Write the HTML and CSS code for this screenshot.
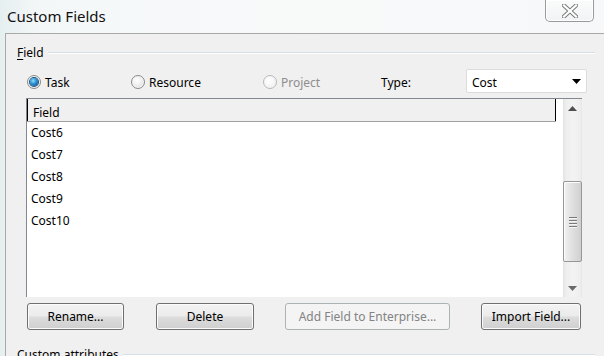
FILE: index.html
```html
<!DOCTYPE html>
<html>
<head>
<meta charset="utf-8">
<link rel="stylesheet" href="styles.css">
</head>
<body>
<div class="window">
  <div class="titlebar">
    <span class="title">Custom Fields</span>
    <div class="close">
      <svg width="16" height="14" viewBox="0 0 16 14">
        <path d="M2 1.5 L14 12.5 M14 1.5 L2 12.5" stroke="#7d7d7d" stroke-width="4.2" stroke-linecap="square" fill="none"/>
        <path d="M2 1.5 L14 12.5 M14 1.5 L2 12.5" stroke="#ffffff" stroke-width="2.2" stroke-linecap="square" fill="none"/>
      </svg>
    </div>
  </div>
  <div class="client">
    <div class="group">
      <span class="glabel"><u>F</u>ield</span>
      <span class="gline"></span>
    </div>
    <div class="radios">
      <div class="opt w1"><span class="radio on"><span class="dot"></span></span><span class="otext">Task</span></div>
      <div class="opt w2"><span class="radio"></span><span class="otext">Resource</span></div>
      <div class="opt w3 disabled"><span class="radio dis"></span><span class="otext">Project</span></div>
      <span class="typelabel otext">Type:</span>
      <div class="combo">
        <span class="otext">Cost</span>
        <svg width="9" height="5" viewBox="0 0 9 5"><polygon points="0,0 9,0 4.5,5" fill="#000"/></svg>
      </div>
    </div>
    <div class="list">
      <div class="listmain">
        <div class="header"><span class="hcell">Field</span></div>
        <div class="row">Cost6</div>
        <div class="row">Cost7</div>
        <div class="row">Cost8</div>
        <div class="row">Cost9</div>
        <div class="row">Cost10</div>
      </div>
      <div class="scroll">
        <div class="sarrow">
          <svg width="9" height="5" viewBox="0 0 9 5"><polygon points="0,5 9,5 4.5,0" fill="#4f4f4f"/></svg>
        </div>
        <div class="strack">
          <div class="thumb">
            <span class="grip"></span><span class="grip"></span><span class="grip"></span><span class="grip"></span>
          </div>
        </div>
        <div class="sarrow">
          <svg width="9" height="5" viewBox="0 0 9 5"><polygon points="0,0 9,0 4.5,5" fill="#6a6a6a"/></svg>
        </div>
      </div>
    </div>
    <div class="buttons">
      <button class="btn b1">Rename...</button>
      <button class="btn b2">Delete</button>
      <button class="btn b3" disabled>Add Field to Enterprise...</button>
      <button class="btn b4">Import Field...</button>
    </div>
    <div class="group g2">
      <span class="glabel">Custom attributes</span>
      <span class="gline"></span>
    </div>
  </div>
</div>
</body>
</html>
```

FILE: styles.css
```css
html, body {
  margin: 0;
  padding: 0;
}
body {
  width: 604px;
  height: 356px;
  overflow: hidden;
  font-family: "Noto Sans", "Open Sans", sans-serif;
  font-size: 12px;
  color: #000;
}
.window {
  width: 604px;
  height: 356px;
  display: flex;
  flex-direction: column;
  overflow: hidden;
  background: linear-gradient(to right, #e6eff0 0px, #f4f7f8 40px, #f8fafa 300px, #f6f8f9 604px);
}
.titlebar {
  height: 33px;
  flex-shrink: 0;
  display: flex;
  align-items: flex-start;
}
.title {
  font-size: 15px;
  line-height: 20px;
  margin-left: 7px;
  margin-top: 6px;
  color: #111;
}
.close {
  margin-left: auto;
  margin-right: 10px;
  width: 47px;
  height: 21px;
  border: 1px solid #9a9a9a;
  border-top: none;
  border-radius: 0 0 5px 5px;
  background: linear-gradient(#fbfbfb, #f1f3f4);
  box-shadow: inset 0 0 0 1px #ffffff;
  display: flex;
  align-items: center;
  justify-content: center;
}
.close svg {
  margin-top: 1px;
}
.client {
  margin-left: 5px;
  flex: 1;
  min-height: 0;
  overflow: hidden;
  border-left: 1px solid #a9a9a9;
  border-top: 1px solid #a9a9a9;
  background: #f0f0f0;
  display: flex;
  flex-direction: column;
}
.client > * {
  flex-shrink: 0;
}
.group {
  margin-left: 11px;
  margin-top: 10px;
  width: 578px;
  height: 16px;
  display: flex;
  align-items: center;
}
.glabel {
  line-height: 16px;
  white-space: nowrap;
  padding-top: 2px;
}
.glabel u {
  text-decoration-thickness: 1px;
  text-underline-offset: 2px;
}
.gline {
  flex: 1;
  height: 1px;
  margin-left: 4px;
  background: #d5dfe5;
  box-shadow: 0 1px 0 #ffffff;
}
.radios {
  margin-left: 21px;
  margin-top: 9px;
  height: 24px;
  display: flex;
  align-items: center;
}
.otext {
  padding-top: 2px;
}
.opt {
  display: flex;
  align-items: center;
  height: 24px;
}
.w1 { width: 104px; }
.w2 { width: 132px; }
.w3 { width: 118px; }
.opt.disabled { color: #8d8d8d; }
.radio {
  width: 12px;
  height: 12px;
  border-radius: 50%;
  border: 1px solid #8a8a8a;
  background: radial-gradient(circle at 40% 35%, #ffffff 0%, #f0f0f0 45%, #cfcfcf 100%);
  box-shadow: inset 0 0 0 1px #f6f6f6;
  margin-right: 4px;
  margin-top: 1px;
  display: flex;
  align-items: center;
  justify-content: center;
}
.radio.dis {
  border-color: #b8b8b8;
  background: radial-gradient(circle at 40% 35%, #ffffff 0%, #f6f6f6 50%, #e2e2e2 100%);
}
.dot {
  width: 8px;
  height: 8px;
  border-radius: 50%;
  background: radial-gradient(circle at 40% 35%, #8fe0ff 0%, #2a8fd0 45%, #0b3f7a 100%);
  box-shadow: 0 0 0 1px #1c5180;
}
.typelabel {
  width: 85px;
}
.combo {
  width: 114px;
  height: 22px;
  border: 1px solid #dcdcdc;
  border-radius: 2px;
  background: #ffffff;
  display: flex;
  align-items: center;
  padding-left: 5px;
  box-sizing: content-box;
}
.combo span {
  flex: 1;
}
.combo svg {
  margin-right: 5px;
}
.list {
  margin-left: 20px;
  margin-top: 5px;
  width: 555px;
  height: 198px;
  border-left: 1px solid #828790;
  border-top: 1px solid #828790;
  display: flex;
  background: #ffffff;
}
.listmain {
  flex: 1;
  display: flex;
  flex-direction: column;
}
.header {
  height: 22px;
  width: 529px;
  border-bottom: 1px solid #a0a0a0;
  background: #f0f0f0;
  display: flex;
}
.hcell {
  flex: 1;
  border-left: 1px solid #000;
  border-right: 1px solid #000;
  padding-left: 5px;
  line-height: 28px;
  height: 22px;
  overflow: hidden;
}
.row {
  height: 22px;
  line-height: 22px;
  padding-left: 4px;
}
.scroll {
  width: 19px;
  display: flex;
  flex-direction: column;
  background: linear-gradient(to right, #e3e3e3 0px, #eeeeee 3px, #f3f3f3 10px, #eeeeee 17px, #e6e6e6 19px);
}
.sarrow {
  height: 18px;
  display: flex;
  align-items: center;
  justify-content: center;
}
.strack {
  flex: 1;
}
.thumb {
  margin-top: 64px;
  height: 79px;
  border: 1px solid #979797;
  border-radius: 2px;
  background: linear-gradient(to right, #f2f2f2 0px, #e4e4e4 6px, #d9d9d9 12px, #cfcfcf 17px);
  box-shadow: inset 1px 1px 0 #fdfdfd;
  display: flex;
  flex-direction: column;
  align-items: center;
  justify-content: center;
  gap: 2px;
}
.grip {
  width: 8px;
  height: 1px;
  background: #7a7a7a;
  box-shadow: 0 1px 0 #f4f4f4;
}
.buttons {
  margin-top: 6px;
  display: flex;
  height: 27px;
}
.btn {
  font-family: "Noto Sans", "Open Sans", sans-serif;
  font-size: 12px;
  color: #000;
  height: 27px;
  padding: 0;
  border: 1px solid #707070;
  border-radius: 3px;
  background: linear-gradient(#f3f3f3 0%, #ebebeb 48%, #dddddd 52%, #cfcfcf 100%);
  box-shadow: inset 0 0 0 1px #fbfbfb;
}
.btn:disabled {
  color: #838383;
  border-color: #adb2b5;
  background: #f4f4f4;
  box-shadow: none;
}
.b1 { margin-left: 21px; width: 97px; }
.b2 { margin-left: 32px; width: 98px; }
.b3 { margin-left: 31px; width: 165px; }
.b4 { margin-left: 31px; width: 100px; }
.g2 {
  margin-top: 16px;
}
```
